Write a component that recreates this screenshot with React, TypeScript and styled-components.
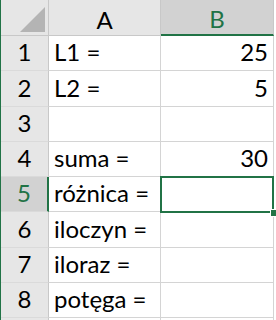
import React from "react";
import styled, { createGlobalStyle } from "styled-components";

const GREEN = "#217346";

const Global = createGlobalStyle`
  html, body { margin: 0; padding: 0; background: #ffffff; }
  body { font-family: Lato, "Open Sans", sans-serif; }
`;

const Sheet = styled.div`
  position: relative;
  width: 276px;
  height: 320px;
  overflow: hidden;
  display: grid;
  grid-template-columns: 48px 112px 113px 3px;
  grid-template-rows: 36px 35px 36px 35px 35px 35px 36px 35px 35px 30px;
  border-left: 1px solid ${GREEN};
  box-sizing: border-box;
  font-size: 24px;
  color: #000;
`;

const Corner = styled.div`
  position: relative;
  background: #e6e6e6;
  border-right: 1px solid #c8c8c8;
  border-bottom: 1px solid #c8c8c8;
  box-sizing: border-box;
`;

const Triangle = styled.div`
  position: absolute;
  right: 3px;
  bottom: 3px;
  width: 0;
  height: 0;
  border-left: 25px solid transparent;
  border-bottom: 25px solid #b4b4b4;
`;

const ColHead = styled.div<{ $sel?: boolean }>`
  display: flex;
  align-items: center;
  justify-content: center;
  padding-top: 3px;
  box-sizing: border-box;
  background: ${(p) => (p.$sel ? "#d2d2d2" : "#e6e6e6")};
  color: ${(p) => (p.$sel ? GREEN : "#000")};
  border-right: 1px solid #c8c8c8;
  border-bottom: ${(p) => (p.$sel ? `2px solid ${GREEN}` : "1px solid #c8c8c8")};
`;

const RowHead = styled.div<{ $sel?: boolean }>`
  display: flex;
  align-items: flex-end;
  justify-content: center;
  padding-bottom: 4px;
  box-sizing: border-box;
  background: ${(p) => (p.$sel ? "#d2d2d2" : "#e6e6e6")};
  color: ${(p) => (p.$sel ? GREEN : "#000")};
  border-right: ${(p) => (p.$sel ? `2px solid ${GREEN}` : "1px solid #c8c8c8")};
  border-bottom: 1px solid #dadada;
`;

const Cell = styled.div<{ $right?: boolean }>`
  display: flex;
  align-items: flex-end;
  justify-content: ${(p) => (p.$right ? "flex-end" : "flex-start")};
  padding: 0 5px 4px 5px;
  box-sizing: border-box;
  white-space: nowrap;
  border-right: 1px solid #d4d4d4;
  border-bottom: 1px solid #d4d4d4;
`;

const Edge = styled.div`
  background: #fff;
`;

const Selection = styled.div`
  position: absolute;
  left: 159px;
  top: 176px;
  width: 114px;
  height: 37px;
  border: 2px solid ${GREEN};
  box-sizing: border-box;
  pointer-events: none;
`;

const Handle = styled.div`
  position: absolute;
  left: 269px;
  top: 209px;
  width: 6px;
  height: 6px;
  background: ${GREEN};
  border: 1px solid #fff;
  box-sizing: content-box;
`;

const rows: [string, string][] = [
  ["L1 =", "25"],
  ["L2 =", "5"],
  ["", ""],
  ["suma =", "30"],
  ["różnica =", ""],
  ["iloczyn =", ""],
  ["iloraz =", ""],
  ["potęga =", ""],
];

export default function App() {
  return (
    <>
      <Global />
      <Sheet>
        <Corner>
          <Triangle />
        </Corner>
        <ColHead>A</ColHead>
        <ColHead $sel>B</ColHead>
        <Edge />
        {rows.map(([a, b], i) => (
          <React.Fragment key={i}>
            <RowHead $sel={i === 4}>{i + 1}</RowHead>
            <Cell>{a}</Cell>
            <Cell $right>{b}</Cell>
            <Edge />
          </React.Fragment>
        ))}
        <RowHead />
        <Cell />
        <Cell />
        <Edge />
        <Selection />
        <Handle />
      </Sheet>
    </>
  );
}
